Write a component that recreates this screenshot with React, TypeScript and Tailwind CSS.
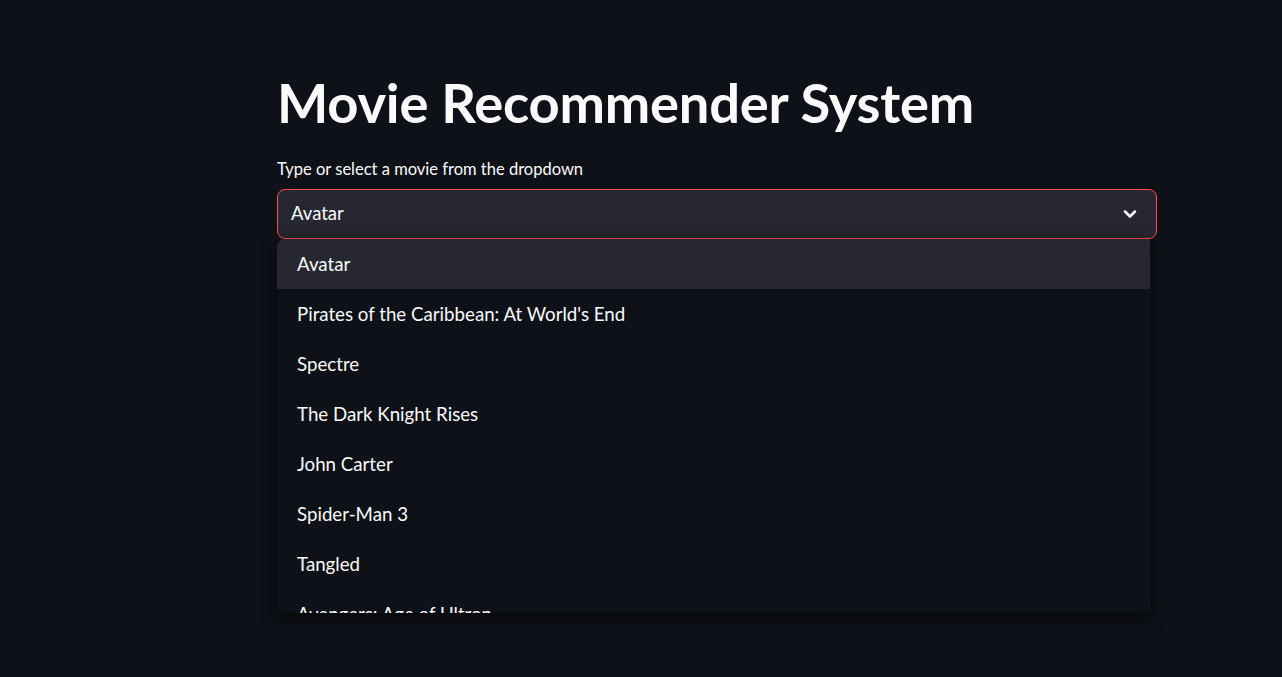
import React from 'react';
import { ChevronDown } from 'lucide-react';

const movies = [
  'Avatar',
  "Pirates of the Caribbean: At World's End",
  'Spectre',
  'The Dark Knight Rises',
  'John Carter',
  'Spider-Man 3',
  'Tangled',
  'Avengers: Age of Ultron',
];

export default function App() {
  return (
    <div className="min-h-[677px] w-full bg-[#0e1117] text-[#fafafa] font-['Lato',sans-serif]">
      <div className="ml-[277px] w-[880px] pt-[70px]">
        <h1 className="text-[54.3px] font-bold leading-[64px] tracking-[-0.2px]">Movie Recommender System</h1>
        <label className="mt-[24px] block text-[16.5px] leading-[22px]">Type or select a movie from the dropdown</label>

        <div className="relative mt-[9px]">
          <div className="flex h-[50px] items-center justify-between rounded-[8px] border border-[#ff4b4b] bg-[#262730] pl-[13px] pr-[16px]">
            <span className="text-[18.5px]">Avatar</span>
            <ChevronDown size={20} strokeWidth={3} />
          </div>

          {/* open menu */}
          <div className="absolute left-0 top-[50px] h-[374px] w-[873px] overflow-hidden rounded-tl-[8px] bg-[#0e1117] shadow-[0_4px_16px_rgba(0,0,0,0.6)]">
            {movies.map((m, i) => (
              <div
                key={m}
                className={`flex h-[50px] items-center px-[20px] text-[18.7px] ${i === 0 ? 'bg-[#262730]' : ''}`}
              >
                {m}
              </div>
            ))}
          </div>
        </div>
      </div>
    </div>
  );
}
